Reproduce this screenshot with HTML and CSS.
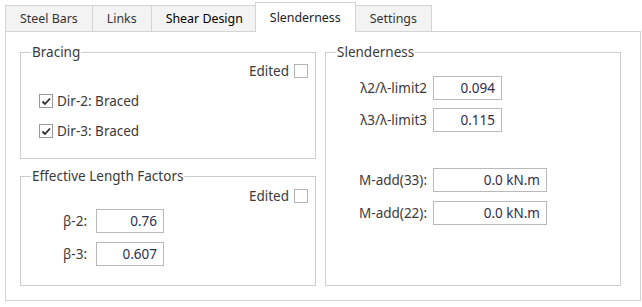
FILE: index.html
```html
<!DOCTYPE html>
<html>
<head>
<meta charset="utf-8">
<link rel="stylesheet" href="styles.css">
</head>
<body>
<div class="tabs">
  <div class="tab">Steel Bars</div>
  <div class="tab">Links</div>
  <div class="tab tab-dark">Shear Design</div>
  <div class="tab active">Slenderness</div>
  <div class="tab">Settings</div>
</div>
<div class="panel">
  <div class="col">
    <fieldset class="group bracing">
      <legend>Bracing</legend>
      <div class="edited"><span>Edited</span><span class="cb"></span></div>
      <div class="check"><span class="cb checked"><svg viewBox="0 0 13 13" width="13" height="13"><polyline points="2.5,6.5 5,9 10,3.5" fill="none" stroke="#2b2b2b" stroke-width="1.8"/></svg></span><span>Dir-2: Braced</span></div>
      <div class="check"><span class="cb checked"><svg viewBox="0 0 13 13" width="13" height="13"><polyline points="2.5,6.5 5,9 10,3.5" fill="none" stroke="#2b2b2b" stroke-width="1.8"/></svg></span><span>Dir-3: Braced</span></div>
    </fieldset>
    <fieldset class="group elf">
      <legend>Effective Length Factors</legend>
      <div class="edited"><span>Edited</span><span class="cb"></span></div>
      <div class="row beta first"><span class="lbl">β-2:</span><span class="field">0.76</span></div>
      <div class="row beta"><span class="lbl">β-3:</span><span class="field">0.607</span></div>
    </fieldset>
  </div>
  <fieldset class="group slender">
    <legend>Slenderness</legend>
    <div class="row sl first"><span class="lbl">λ2/λ-limit2</span><span class="field">0.094</span></div>
    <div class="row sl"><span class="lbl">λ3/λ-limit3</span><span class="field">0.115</span></div>
    <div class="row sl madd first-m"><span class="lbl">M-add(33):</span><span class="field wide">0.0 kN.m</span></div>
    <div class="row sl madd"><span class="lbl">M-add(22):</span><span class="field wide">0.0 kN.m</span></div>
  </fieldset>
</div>
</body>
</html>
```
FILE: styles.css
```css
* { box-sizing: border-box; }
html, body { margin: 0; background: #ffffff; }
body {
  font-family: "Noto Sans", "Open Sans", sans-serif;
  font-size: 13.5px;
  line-height: 16px;
  color: #3a3a3a;
  width: 642px;
  height: 307px;
  overflow: hidden;
}
.tabs {
  display: flex;
  align-items: flex-end;
  margin: 2px 0 0 5px;
  height: 29px;
  font-size: 12.4px;
}
.tab {
  height: 26px;
  padding: 5px 14px 0 14px;
  border: 1px solid #d4d4d4;
  border-bottom: none;
  background: #f3f3f3;
  color: #333;
  margin-right: -1px;
}
.tab-dark { color: #000; }
.tab.active {
  height: 30px;
  margin: 0 -1px -1px -2px;
  padding-top: 7px;
  background: #fff;
  position: relative;
  z-index: 1;
  color: #222;
}
.panel {
  margin: 0 1px 0 5px;
  height: 270px;
  border: 1px solid #d4d4d4;
  padding: 12px 19px 14px 14px;
  display: grid;
  grid-template-columns: 296px 296px;
  column-gap: 9px;
}
.col {
  display: flex;
  flex-direction: column;
  gap: 9px;
}
.group {
  margin: 0;
  padding: 0;
  border: 1px solid #cdcdcd;
  min-width: 0;
}
.group legend {
  margin-left: 10px;
  padding: 0 1px;
  color: #3a3a3a;
  line-height: 16px;
}
.bracing { padding-bottom: 19px; }
.elf { flex: 1; }
.edited {
  display: flex;
  justify-content: flex-end;
  align-items: center;
  gap: 5px;
  padding-right: 7px;
  margin-top: 3px;
  height: 16px;
}
.elf .edited { margin-top: 4px; }
.cb {
  display: inline-block;
  width: 14px;
  height: 14px;
  border: 1px solid #b3b3b3;
  background: #fff;
}
.cb.checked {
  width: 14px;
  height: 14px;
  border-color: #9a9a9a;
  position: relative;
}
.cb.checked svg { display: block; }
.check {
  display: flex;
  align-items: center;
  gap: 4px;
  height: 16px;
  margin-top: 14px;
  padding-left: 18px;
}
.row {
  display: flex;
  align-items: center;
  height: 24px;
}
.lbl { text-align: right; flex: none; }
.field {
  height: 24px;
  border: 1px solid #b9b9b9;
  background: #fff;
  text-align: right;
  padding: 3px 6px 0 0;
  color: #2e2e4e;
  flex: none;
}
.beta { margin-top: 9px; }
.beta.first { margin-top: 5px; }
.beta .lbl { width: 66px; margin-right: 9px; }
.beta .field { width: 68px; }
.sl { margin-top: 8px; }
.sl.first { margin-top: 16px; }
.sl.first-m { margin-top: 36px; }
.madd { margin-top: 9px; }
.sl .lbl { width: 101px; margin-right: 6px; }
.sl .field { width: 69px; }
.sl .field.wide { width: 114px; }
```
